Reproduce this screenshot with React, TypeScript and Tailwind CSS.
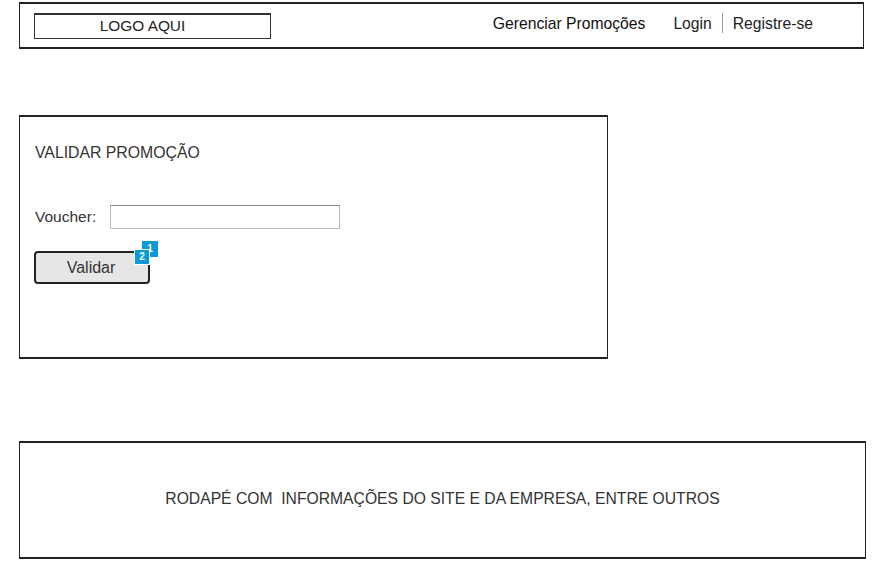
import React from "react";

const App: React.FC = () => {
  return (
    <div className="w-[877px] h-[569px] bg-white font-['Liberation_Sans',Arial,sans-serif] overflow-hidden">
      {/* Header */}
      <div className="ml-[19px] mt-[2px] w-[845px] h-[47px] border-x border-y-2 border-[#222] flex items-center">
        <div className="ml-[14px] w-[237px] h-[26px] border border-t-2 border-[#333] flex items-center justify-center text-[15.4px] text-[#222] pr-[20px]">
          LOGO AQUI
        </div>
        <div className="ml-auto flex items-center text-[15.7px] text-[#111] mb-[4px]">
          <span>Gerenciar Promoções</span>
          <span className="ml-[28px] text-[#222]">Login</span>
          <span className="mx-[10px] h-[20px] w-px bg-[#999]" />
          <span className="text-[#222]">Registre-se</span>
          <span className="w-[50px]" />
        </div>
      </div>

      {/* Main card */}
      <div className="ml-[19px] mt-[66px] w-[589px] h-[244px] border-x border-y-2 border-[#222] pl-[15px] pt-[26px]">
        <div className="text-[15.8px] text-[#333] leading-[20px]">VALIDAR PROMOÇÃO</div>
        <div className="mt-[42px] flex items-center">
          <span className="text-[15.5px] text-[#333] w-[75px]">Voucher:</span>
          <input
            className="w-[230px] h-[24px] border border-[#bbb] border-t-[#888] outline-none"
            type="text"
          />
        </div>
        <div className="relative mt-[22px] -ml-px w-[116px]">
          <button className="w-[116px] h-[33px] bg-[#e6e6e6] border-2 border-[#222] rounded-[4px] text-[16px] text-[#333] pr-[2px]">
            Validar
          </button>
          <span className="absolute left-[108px] top-[-10px] w-[16px] h-[16px] bg-[#0a9ad8] text-white text-[10px] font-bold flex items-center justify-center leading-none">
            1
          </span>
          <span className="absolute left-[100px] top-[-2px] w-[16px] h-[16px] bg-[#0a9ad8] border border-white text-white text-[10px] font-bold flex items-center justify-center leading-none">
            2
          </span>
        </div>
      </div>

      {/* Footer */}
      <div className="ml-[19px] mt-[82px] w-[847px] h-[118px] border-x border-y-2 border-[#222] flex items-center justify-center">
        <span className="text-[15.7px] text-[#333] whitespace-pre mb-[3px]">
          RODAPÉ COM  INFORMAÇÕES DO SITE E DA EMPRESA, ENTRE OUTROS
        </span>
      </div>
    </div>
  );
};

export default App;
